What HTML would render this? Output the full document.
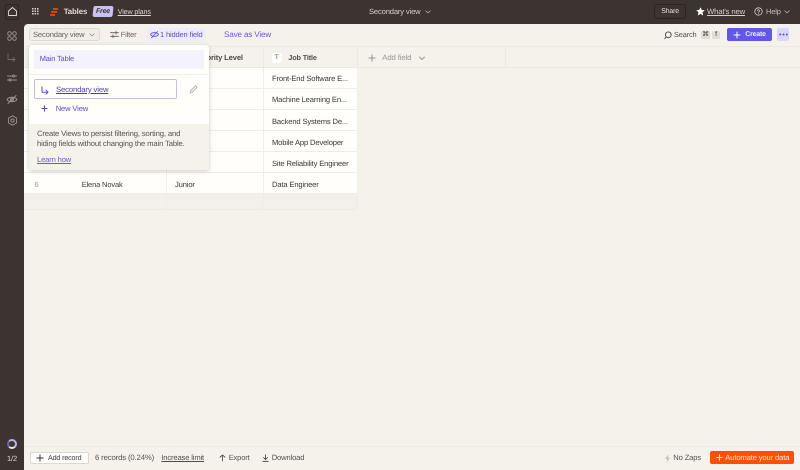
<!DOCTYPE html>
<html><head><meta charset="utf-8"><style>
*{box-sizing:border-box}
html,body{margin:0;padding:0}
body{width:800px;height:470px;overflow:hidden;position:relative;background:#3d3331;font-family:"Liberation Sans",sans-serif;font-size:8px;color:#2d2e2e;letter-spacing:-.15px;text-rendering:geometricPrecision}
.a{position:absolute;white-space:nowrap}
svg{position:absolute;fill:none;stroke-linecap:round;stroke-linejoin:round}
.cell{position:absolute;background:#fffefb;border-bottom:1px solid #f0ede7}
</style></head><body>

<!-- top bar -->
<svg style="left:6.500px;top:6px" width="11" height="11" viewBox="0 0 11 11" stroke="#dedad2" stroke-width=".9"><path d="M1.500 5L5.500 1.500L9.500 5V9.500H1.500Z"/></svg>
<div class="a" style="left:5px;top:3.500px;width:14px;height:16px;border:1px solid #2c2523;border-radius:3px"></div>
<svg style="left:31.500px;top:8px" width="8" height="8" viewBox="0 0 8 8"><g fill="#d8d4cc"><rect x="0" y="0" width="1.500" height="1.500"/><rect x="2.500" y="0" width="1.500" height="1.500"/><rect x="5" y="0" width="1.500" height="1.500"/><rect x="0" y="2.500" width="1.500" height="1.500"/><rect x="2.500" y="2.500" width="1.500" height="1.500"/><rect x="5" y="2.500" width="1.500" height="1.500"/><rect x="0" y="5" width="1.500" height="1.500"/><rect x="2.500" y="5" width="1.500" height="1.500"/><rect x="5" y="5" width="1.500" height="1.500"/></g></svg>
<svg style="left:50px;top:8px" width="8" height="8" viewBox="0 0 8 8" stroke="#ff4f00" stroke-width="1.500"><path d="M3 1H8M1 4H7M0 7H5" stroke-linecap="butt"/></svg>
<div class="a" style="left:63.700px;top:6.500px;font-size:7.900px;font-weight:bold;color:#dedad2">Tables</div>
<div class="a" style="left:93px;top:6px;width:20px;height:11px;background:#c9c0f5;border-radius:2px;transform:skewX(-6deg)"></div>
<div class="a" style="left:96px;top:7.600px;font-size:6.900px;font-style:italic;color:#3d3331;font-weight:bold">Free</div>
<div class="a" style="left:117.700px;top:7px;font-size:7.200px;color:#dedad2;text-decoration:underline">View plans</div>
<div class="a" style="left:369px;top:7px;font-size:7.600px;color:#d5d1c9">Secondary view</div>
<svg style="left:425px;top:10px" width="6" height="4" viewBox="0 0 6 4" stroke="#bdb9b1" stroke-width=".7"><path d="M.7.8L3 3L5.300.8"/></svg>
<div class="a" style="left:654px;top:4px;width:32px;height:15px;border:1px solid #2c2523;border-radius:3px"></div>
<div class="a" style="left:661.300px;top:7.600px;font-size:6.900px;color:#e4e1d9">Share</div>
<svg style="left:695.500px;top:7px" width="9" height="9" viewBox="0 0 9 9"><path fill="#fffefb" d="M4.500 .3L5.800 3L8.800 3.300L6.500 5.300L7.200 8.500L4.500 6.900L1.800 8.500L2.500 5.300L.2 3.300L3.200 3Z"/></svg>
<div class="a" style="left:707px;top:6.800px;font-size:7.700px;color:#d5d1c9;text-decoration:underline">What's new</div>
<svg style="left:754px;top:7px" width="9" height="9" viewBox="0 0 9 9" stroke="#d5d1c9" stroke-width=".8"><circle cx="4.500" cy="4.500" r="3.700"/><path d="M3.400 3.500A1.100 1.100 0 1 1 4.500 5V5.400M4.500 6.600V6.700"/></svg>
<div class="a" style="left:766px;top:6.800px;font-size:7.500px;color:#c4c0b8">Help</div>
<svg style="left:784px;top:10px" width="6" height="4" viewBox="0 0 6 4" stroke="#bdb9b1" stroke-width=".7"><path d="M.7.8L3 3L5.300.8"/></svg>

<!-- side icons -->
<svg style="left:7px;top:31px" width="10" height="10" viewBox="0 0 10 10" stroke="#9b968f" stroke-width=".9"><circle cx="2.500" cy="2.500" r="1.800"/><circle cx="7.500" cy="2.500" r="1.800"/><circle cx="2.500" cy="7.500" r="1.800"/><circle cx="7.500" cy="7.500" r="1.800"/></svg>
<svg style="left:7px;top:53px" width="9" height="9" viewBox="0 0 9 9" stroke="#6f6863" stroke-width=".9"><path d="M1 1V6.500H8M6 4.500L8 6.500L6 8.500"/></svg>
<svg style="left:7px;top:73px" width="10" height="10" viewBox="0 0 10 10" stroke="#9b968f" stroke-width=".9"><path d="M.5 3H9.500M.5 7H9.500"/><circle cx="6.500" cy="3" r="1" fill="#3d3331"/><circle cx="3" cy="7" r="1" fill="#3d3331"/></svg>
<svg style="left:6px;top:94px" width="12" height="11" viewBox="0 0 12 11" stroke="#9b968f" stroke-width=".9"><path d="M1 5.500C3 2.500 9 2.500 11 5.500C9 8.500 3 8.500 1 5.500Z"/><circle cx="6" cy="5.500" r="1.500"/><path d="M2 9.500L10 1.500"/></svg>
<svg style="left:6.500px;top:115px" width="11" height="11" viewBox="0 0 11 11" stroke="#9b968f" stroke-width=".9"><circle cx="5.500" cy="5.500" r="1.600"/><path d="M5.500 .8L9.600 3.100V7.900L5.500 10.200L1.400 7.900V3.100Z"/></svg>
<div class="a" style="left:7px;top:439px;width:10px;height:10px;border-radius:50%;border:2px solid #b9b5e0;border-left-color:#6f69a8;border-bottom-color:#e8e5f5"></div>
<div class="a" style="left:7px;top:453.500px;font-size:7.500px;color:#e0dcd4">1/2</div>

<!-- main panel -->
<div class="a" style="left:23.500px;top:23.500px;width:776.500px;height:446.500px;background:#f5f2ec;border-top-left-radius:4px"></div>

<!-- toolbar -->
<div class="a" style="left:28.500px;top:28.300px;width:71.500px;height:13px;border:1px solid #dcd9d1;border-radius:3px;background:#f1eee7"></div>
<div class="a" style="left:33px;top:30.300px;font-size:7.600px;color:#66635e">Secondary view</div>
<svg style="left:89px;top:33px" width="6" height="4" viewBox="0 0 6 4" stroke="#8a8780" stroke-width=".7"><path d="M.7.8L3 3L5.300.8"/></svg>
<svg style="left:110px;top:30px" width="9" height="9" viewBox="0 0 9 9" stroke="#5c5a56" stroke-width=".8"><path d="M.5 2.700H8.500M.5 6.300H8.500M6 1.200V4.200M3 4.800V7.800"/></svg>
<div class="a" style="left:120.700px;top:30.300px;font-size:7.500px;color:#66635e">Filter</div>
<div class="a" style="left:147px;top:28.300px;width:59px;height:13px;background:#eeecfb;border-radius:2px"></div>
<svg style="left:149.500px;top:30px" width="9" height="9" viewBox="0 0 9 9" stroke="#6a5bd0" stroke-width=".9"><path d="M.5 4.500C2 2 7 2 8.500 4.500C7 7 2 7 .5 4.500Z"/><path d="M1.500 7.800L7.500 1.500"/></svg>
<div class="a" style="left:160px;top:30.300px;font-size:7.500px;color:#5b4fc7">1 hidden field</div>
<div class="a" style="left:224px;top:30px;font-size:8.100px;color:#6a5bd0">Save as View</div>
<svg style="left:664px;top:30.500px" width="8" height="9" viewBox="0 0 8 9" stroke="#4a4845" stroke-width=".9"><circle cx="4.300" cy="3.800" r="2.900"/><path d="M2 6.200L.8 7.600"/></svg>
<div class="a" style="left:674px;top:30.300px;font-size:7.400px;color:#4f4d49">Search</div>
<div class="a" style="left:701px;top:31px;width:9px;height:8px;background:#dfdcd4;border-radius:1.500px;font-size:7px;line-height:8px;text-align:center;color:#4a4845">⌘</div>
<div class="a" style="left:712px;top:31px;width:8px;height:8px;background:#dfdcd4;border-radius:1.500px;font-size:7px;line-height:8px;text-align:center;color:#4a4845">f</div>
<div class="a" style="left:726.700px;top:28.300px;width:45.600px;height:12.700px;background:#6157e8;border-radius:2px"></div>
<svg style="left:733px;top:31px" width="8" height="8" viewBox="0 0 8 8" stroke="#fff" stroke-width="1"><path d="M4 1V7M1 4H7"/></svg>
<div class="a" style="left:745.300px;top:31.300px;font-size:6.900px;color:#f1efff;font-weight:bold">Create</div>
<div class="a" style="left:776.700px;top:28.300px;width:12.600px;height:12.700px;background:#d9d7fa;border-radius:2px"></div>
<svg style="left:778.500px;top:33px" width="9" height="3" viewBox="0 0 9 3"><g fill="#5b4fc7"><circle cx="1.200" cy="1.500" r="1"/><circle cx="4.500" cy="1.500" r="1"/><circle cx="7.800" cy="1.500" r="1"/></g></svg>

<!-- table -->
<div class="a" style="left:23.500px;top:46px;width:776.500px;height:1px;background:#ece9e2"></div>
<div class="a" style="left:23.500px;top:67px;width:776.500px;height:1px;background:#ece9e2"></div>
<div class="a" style="left:357px;top:47px;width:1px;height:21px;background:#ece9e2"></div>
<div class="a" style="left:505px;top:47px;width:1px;height:21px;background:#ece9e2"></div>
<div class="a" style="left:263px;top:47px;width:1px;height:21px;background:#ece9e2"></div>
<div class="cell" style="left:23.500px;top:68px;width:333.500px;height:21px"></div>
<div class="cell" style="left:23.500px;top:89px;width:333.500px;height:21px"></div>
<div class="cell" style="left:23.500px;top:110px;width:333.500px;height:21px"></div>
<div class="cell" style="left:23.500px;top:131px;width:333.500px;height:21px"></div>
<div class="cell" style="left:23.500px;top:152px;width:333.500px;height:21px"></div>
<div class="cell" style="left:23.500px;top:173px;width:333.500px;height:21px"></div>
<div class="a" style="left:23.500px;top:194px;width:334px;height:16px;background:#f3f0ea;border-bottom:1px solid #eeebe4;border-right:1px solid #f0ede7;border-bottom-right-radius:3px"></div>
<div class="a" style="left:166px;top:68px;width:1px;height:142px;background:#f0ede7"></div>
<div class="a" style="left:263px;top:68px;width:1px;height:142px;background:#f0ede7"></div>

<div class="a" style="left:191px;top:53.200px;font-size:7.620px;font-weight:bold;color:#4f4d49">Seniority Level</div>
<div class="a" style="left:271.700px;top:53px;width:10px;height:10px;background:#fffefb;border-radius:2px;font-size:7px;line-height:10px;text-align:center;color:#6b6965">T</div>
<div class="a" style="left:288.300px;top:53.200px;font-size:7.300px;font-weight:bold;color:#4f4d49">Job Title</div>
<svg style="left:367.500px;top:54px" width="8" height="8" viewBox="0 0 8 8" stroke="#7d7a74" stroke-width=".8"><path d="M4 .8V7.200M.8 4H7.200"/></svg>
<div class="a" style="left:382.300px;top:53.200px;font-size:7.800px;color:#9b9892">Add field</div>
<svg style="left:419px;top:55.500px" width="6" height="5" viewBox="0 0 6 5" stroke="#7d7a74" stroke-width=".8"><path d="M.5 1L3 3.500L5.500 1"/></svg>

<div class="a" style="left:272px;top:74.200px;font-size:7.600px;color:#3a3937">Front-End Software E...</div>
<div class="a" style="left:272px;top:95.400px;font-size:7.600px;color:#3a3937">Machine Learning En...</div>
<div class="a" style="left:272px;top:116.600px;font-size:7.600px;color:#3a3937">Backend Systems De...</div>
<div class="a" style="left:272px;top:137.800px;font-size:7.600px;color:#3a3937">Mobile App Developer</div>
<div class="a" style="left:272px;top:159px;font-size:7.600px;color:#3a3937">Site Reliability Engineer</div>
<div class="a" style="left:272px;top:180.200px;font-size:7.600px;color:#3a3937">Data Engineer</div>
<div class="a" style="left:175px;top:180.200px;font-size:7.600px;color:#3a3937">Junior</div>
<div class="a" style="left:81.700px;top:180.200px;font-size:7.500px;color:#3a3937">Elena Novak</div>
<div class="a" style="left:34.500px;top:180.200px;font-size:7.600px;color:#9b9892">6</div>

<!-- dropdown -->
<div class="a" style="left:29px;top:44.500px;width:180px;height:125.500px;background:#fffefb;border-radius:3px;box-shadow:0 1px 4px rgba(60,50,40,.25);overflow:hidden">
  <div class="a" style="left:5px;top:5.500px;width:169.700px;height:18.700px;background:#f3f2fd;border-radius:2px"></div>
  <div class="a" style="left:0;top:29.500px;width:180px;height:1px;background:#f2efe9"></div>
  <div class="a" style="left:0;top:79.500px;width:180px;height:46px;background:#f5f2ec"></div>
</div>
<div class="a" style="left:39.700px;top:54.400px;font-size:7.450px;color:#5b4fc7">Main Table</div>
<div class="a" style="left:34.300px;top:79.300px;width:142.700px;height:20px;background:#fffefb;border:1px solid #c3bee3;border-radius:2px"></div>
<svg style="left:41px;top:85.500px" width="8" height="9" viewBox="0 0 8 9" stroke="#5b4fc7" stroke-width="1"><path d="M1 .8V6.200H7M5 4.200L7 6.200L5 8.200"/></svg>
<div class="a" style="left:56px;top:84.800px;font-size:7.720px;color:#4b3fb0;text-decoration:underline">Secondary view</div>
<svg style="left:189px;top:85px" width="9" height="9" viewBox="0 0 9 9" stroke="#b5b2ab" stroke-width=".9"><path d="M1 8L1.500 6L6.500 1L8 2.500L3 7.500Z"/></svg>
<svg style="left:40.500px;top:105px" width="7" height="7" viewBox="0 0 7 7" stroke="#5b4fc7" stroke-width="1"><path d="M3.500 .8V6.200M.8 3.500H6.200"/></svg>
<div class="a" style="left:55.700px;top:104.300px;font-size:7.600px;color:#5b4fc7">New View</div>
<div class="a" style="left:37px;top:129.300px;font-size:7.700px;color:#55534f">Create Views to persist filtering, sorting, and</div>
<div class="a" style="left:37px;top:139.300px;font-size:7.700px;color:#55534f">hiding fields without changing the main Table.</div>
<div class="a" style="left:37px;top:155.300px;font-size:7.600px;color:#6a5bd0;text-decoration:underline">Learn how</div>

<!-- footer -->
<div class="a" style="left:23.500px;top:445.500px;width:776.500px;height:1px;background:#eeebe4"></div>
<div class="a" style="left:29.700px;top:451.600px;width:59px;height:12px;background:#fffefb;border:1px solid #dcd9d1;border-radius:2px"></div>
<svg style="left:36px;top:454px" width="8" height="8" viewBox="0 0 8 8" stroke="#2d2e2e" stroke-width=".9"><path d="M4 .8V7.200M.8 4H7.200"/></svg>
<div class="a" style="left:48px;top:453.800px;font-size:7.150px;color:#3a3937">Add record</div>
<div class="a" style="left:95px;top:453.200px;font-size:7.760px;color:#55534f">6 records (0.24%)</div>
<div class="a" style="left:161.300px;top:453.200px;font-size:7.620px;color:#4f4d49;text-decoration:underline">Increase limit</div>
<svg style="left:219px;top:453.500px" width="7" height="8" viewBox="0 0 7 8" stroke="#3a3937" stroke-width=".8"><path d="M3.500 7V1M1 3.200L3.500 1L6 3.200"/></svg>
<div class="a" style="left:228.700px;top:453.200px;font-size:7.520px;color:#55534f">Export</div>
<svg style="left:262px;top:453.500px" width="7" height="8" viewBox="0 0 7 8" stroke="#3a3937" stroke-width=".8"><path d="M3.500 .8V5.200M1.500 3.500L3.500 5.400L5.500 3.500M.8 7.300H6.200"/></svg>
<div class="a" style="left:271.700px;top:453.200px;font-size:7.620px;color:#55534f">Download</div>
<svg style="left:664px;top:453.500px" width="7" height="9" viewBox="0 0 7 9"><path fill="#c4c1ba" d="M4.500 .3L1 5H3L2.500 8.700L6 3.800H4Z"/></svg>
<div class="a" style="left:673.300px;top:453.200px;font-size:7.620px;color:#55534f">No Zaps</div>
<div class="a" style="left:710px;top:451.300px;width:83.700px;height:12.400px;background:#ff4f00;border-radius:2px"></div>
<svg style="left:715.500px;top:454px" width="7" height="7" viewBox="0 0 7 7" stroke="#fff" stroke-width="1"><path d="M3.500 .8V6.200M.8 3.500H6.200"/></svg>
<div class="a" style="left:725.300px;top:453.200px;font-size:7.650px;color:#ffe9dd">Automate your data</div>
</body></html>
